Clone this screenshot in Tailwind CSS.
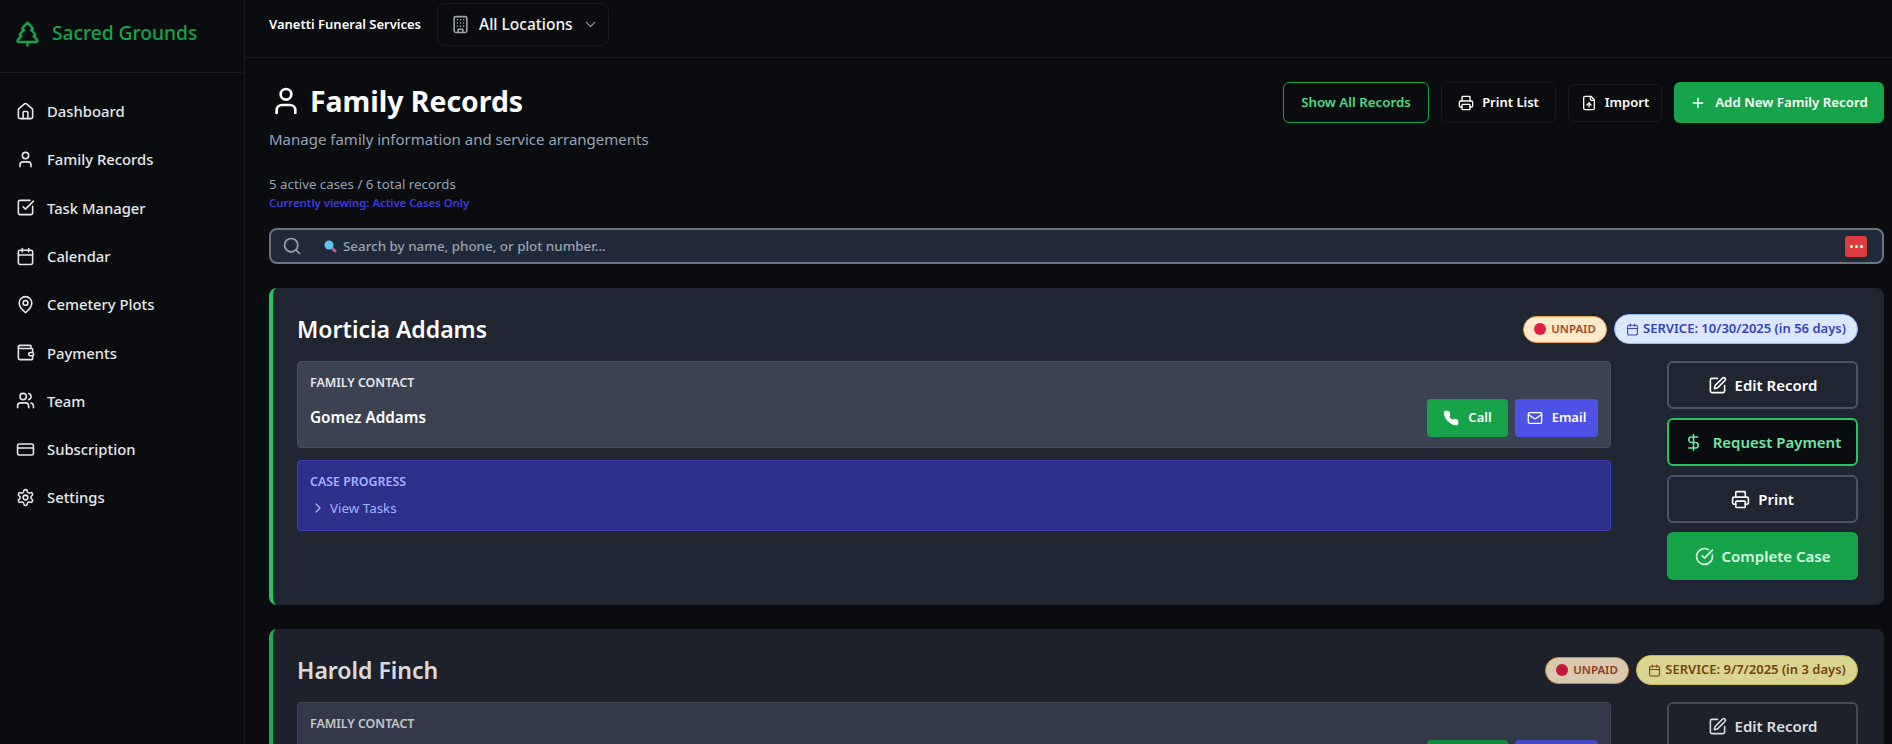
<!DOCTYPE html>
<html lang="en">
<head>
<meta charset="utf-8">
<title>Family Records</title>
<script src="https://cdn.jsdelivr.net/npm/@tailwindcss/browser@4"></script>
</head>
<body class="bg-[#0b0c0f] text-white font-['Noto_Sans',sans-serif] overflow-hidden">
<div class="flex h-[744px] w-[1892px] overflow-hidden">
  <aside class="w-[245px] shrink-0 border-r border-[#1a1c20] flex flex-col">
    <div class="h-[73px] shrink-0 border-b border-[#1a1c20] flex items-center pl-[13px] gap-[10px] pb-[6px]">
      <svg class="w-[29px] h-[29px] text-[#16a34a]" viewBox="0 0 24 24" fill="none" stroke="currentColor" stroke-width="2" stroke-linecap="round" stroke-linejoin="round"><path d="m17 14 3 3.3a1 1 0 0 1-.7 1.7H4.7a1 1 0 0 1-.7-1.7L7 14h-.3a1 1 0 0 1-.7-1.7L9 9h-.2A1 1 0 0 1 8 7.3L12 3l4 4.3a1 1 0 0 1-.8 1.7H15l3 3.3a1 1 0 0 1-.7 1.7H17Z"/><path d="M12 22v-3"/></svg>
      <span class="text-[19.2px] font-medium text-[#16a34a]">Sacred Grounds</span>
    </div>
    <nav class="flex flex-col pt-[14px] text-[14.8px] font-medium text-[#e5e7eb]">
      <a class="h-[48.3px] flex items-center gap-[12px] pl-[16px]"><svg class="w-[19px] h-[19px]" viewBox="0 0 24 24" fill="none" stroke="currentColor" stroke-width="2" stroke-linecap="round" stroke-linejoin="round"><path d="M15 21v-8a1 1 0 0 0-1-1h-4a1 1 0 0 0-1 1v8"/><path d="M3 10a2 2 0 0 1 .709-1.528l7-5.999a2 2 0 0 1 2.582 0l7 5.999A2 2 0 0 1 21 10v9a2 2 0 0 1-2 2H5a2 2 0 0 1-2-2z"/></svg>Dashboard</a>
      <a class="h-[48.3px] flex items-center gap-[12px] pl-[16px]"><svg class="w-[19px] h-[19px]" viewBox="0 0 24 24" fill="none" stroke="currentColor" stroke-width="2" stroke-linecap="round" stroke-linejoin="round"><path d="M19 21v-2a4 4 0 0 0-4-4H9a4 4 0 0 0-4 4v2"/><circle cx="12" cy="7" r="4"/></svg>Family Records</a>
      <a class="h-[48.3px] flex items-center gap-[12px] pl-[16px]"><svg class="w-[19px] h-[19px]" viewBox="0 0 24 24" fill="none" stroke="currentColor" stroke-width="2" stroke-linecap="round" stroke-linejoin="round"><path d="M21 10.5V19a2 2 0 0 1-2 2H5a2 2 0 0 1-2-2V5a2 2 0 0 1 2-2h12.5"/><path d="m9 11 3 3L22 4"/></svg>Task Manager</a>
      <a class="h-[48.3px] flex items-center gap-[12px] pl-[16px]"><svg class="w-[19px] h-[19px]" viewBox="0 0 24 24" fill="none" stroke="currentColor" stroke-width="2" stroke-linecap="round" stroke-linejoin="round"><path d="M8 2v4"/><path d="M16 2v4"/><rect x="3" y="4" width="18" height="18" rx="2"/><path d="M3 10h18"/></svg>Calendar</a>
      <a class="h-[48.3px] flex items-center gap-[12px] pl-[16px]"><svg class="w-[19px] h-[19px]" viewBox="0 0 24 24" fill="none" stroke="currentColor" stroke-width="2" stroke-linecap="round" stroke-linejoin="round"><path d="M20 10c0 4.993-5.539 10.193-7.399 11.799a1 1 0 0 1-1.202 0C9.539 20.193 4 14.993 4 10a8 8 0 0 1 16 0"/><circle cx="12" cy="10" r="3"/></svg>Cemetery Plots</a>
      <a class="h-[48.3px] flex items-center gap-[12px] pl-[16px]"><svg class="w-[19px] h-[19px]" viewBox="0 0 24 24" fill="none" stroke="currentColor" stroke-width="2" stroke-linecap="round" stroke-linejoin="round"><path d="M19 7V4a1 1 0 0 0-1-1H5a2 2 0 0 0 0 4h15a1 1 0 0 1 1 1v4h-3a2 2 0 0 0 0 4h3a1 1 0 0 0 1-1v-2a1 1 0 0 0-1-1"/><path d="M3 5v14a2 2 0 0 0 2 2h15a1 1 0 0 0 1-1v-4"/></svg>Payments</a>
      <a class="h-[48.3px] flex items-center gap-[12px] pl-[16px]"><svg class="w-[19px] h-[19px]" viewBox="0 0 24 24" fill="none" stroke="currentColor" stroke-width="2" stroke-linecap="round" stroke-linejoin="round"><path d="M16 21v-2a4 4 0 0 0-4-4H6a4 4 0 0 0-4 4v2"/><circle cx="9" cy="7" r="4"/><path d="M22 21v-2a4 4 0 0 0-3-3.87"/><path d="M16 3.13a4 4 0 0 1 0 7.75"/></svg>Team</a>
      <a class="h-[48.3px] flex items-center gap-[12px] pl-[16px]"><svg class="w-[19px] h-[19px]" viewBox="0 0 24 24" fill="none" stroke="currentColor" stroke-width="2" stroke-linecap="round" stroke-linejoin="round"><rect x="2" y="5" width="20" height="14" rx="2"/><line x1="2" y1="10" x2="22" y2="10"/></svg>Subscription</a>
      <a class="h-[48.3px] flex items-center gap-[12px] pl-[16px]"><svg class="w-[19px] h-[19px]" viewBox="0 0 24 24" fill="none" stroke="currentColor" stroke-width="2" stroke-linecap="round" stroke-linejoin="round"><path d="M12.22 2h-.44a2 2 0 0 0-2 2v.18a2 2 0 0 1-1 1.73l-.43.25a2 2 0 0 1-2 0l-.15-.08a2 2 0 0 0-2.73.73l-.22.38a2 2 0 0 0 .73 2.73l.15.1a2 2 0 0 1 1 1.72v.51a2 2 0 0 1-1 1.74l-.15.09a2 2 0 0 0-.73 2.73l.22.38a2 2 0 0 0 2.73.73l.15-.08a2 2 0 0 1 2 0l.43.25a2 2 0 0 1 1 1.73V20a2 2 0 0 0 2 2h.44a2 2 0 0 0 2-2v-.18a2 2 0 0 1 1-1.73l.43-.25a2 2 0 0 1 2 0l.15.08a2 2 0 0 0 2.73-.73l.22-.39a2 2 0 0 0-.73-2.73l-.15-.08a2 2 0 0 1-1-1.74v-.5a2 2 0 0 1 1-1.74l.15-.09a2 2 0 0 0 .73-2.73l-.22-.38a2 2 0 0 0-2.73-.73l-.15.08a2 2 0 0 1-2 0l-.43-.25a2 2 0 0 1-1-1.73V4a2 2 0 0 0-2-2z"/><circle cx="12" cy="12" r="3"/></svg>Settings</a>
    </nav>
  </aside>
  <div class="flex-1 min-w-0 flex flex-col overflow-hidden">
    <header class="h-[58px] shrink-0 border-b border-[#1a1c20] flex items-start pl-[24px] pt-[3px] gap-[16px]">
      <span class="text-[13px] font-semibold leading-[43px] text-white">Vanetti Funeral Services</span>
      <div class="h-[43px] w-[172px] rounded-lg border border-[#1a1c20] flex items-center pl-[13px] gap-[9px]">
        <svg class="w-[19px] h-[19px] text-[#9ca3af]" viewBox="0 0 24 24" fill="none" stroke="currentColor" stroke-width="2" stroke-linecap="round" stroke-linejoin="round"><rect x="4" y="2" width="16" height="20" rx="2"/><path d="M9 22v-4h6v4"/><path d="M8 6h.01"/><path d="M16 6h.01"/><path d="M12 6h.01"/><path d="M12 10h.01"/><path d="M12 14h.01"/><path d="M16 10h.01"/><path d="M16 14h.01"/><path d="M8 10h.01"/><path d="M8 14h.01"/></svg>
        <span class="text-[15.5px] font-medium text-[#f3f4f6]">All Locations</span>
        <svg class="w-[17px] h-[17px] text-[#9ca3af]" viewBox="0 0 24 24" fill="none" stroke="currentColor" stroke-width="1.6" stroke-linecap="round" stroke-linejoin="round"><path d="m6 9 6 6 6-6"/></svg>
      </div>
    </header>
    <main class="flex-1 min-h-0 pl-[24px] pr-[8px]">
      <div class="flex items-start justify-between pt-[23px]">
        <div>
          <div class="flex items-center gap-[8px] pl-[1px]">
            <svg class="w-[32px] h-[32px]" viewBox="0 0 24 24" fill="none" stroke="currentColor" stroke-width="2" stroke-linecap="round" stroke-linejoin="round"><path d="M19 21v-2a4 4 0 0 0-4-4H9a4 4 0 0 0-4 4v2"/><circle cx="12" cy="7" r="4"/></svg>
            <h1 class="text-[28.4px] leading-[40px] font-bold">Family Records</h1>
          </div>
          <p class="text-[15px] leading-[22px] mt-[7px] text-[#94a3b8]">Manage family information and service arrangements</p>
        </div>
        <div class="flex items-center gap-[12px] mt-[1px]">
          <button class="h-[41px] w-[146px] rounded-md border border-[#16a34a] text-[13.3px] font-semibold text-[#4ade80] bg-[#0b0c0f]">Show All Records</button>
          <button class="h-[41px] w-[115px] rounded-md border border-[#1a1c20] flex items-center justify-center gap-[8px] text-[13px] font-semibold"><svg class="w-[16px] h-[16px]" viewBox="0 0 24 24" fill="none" stroke="currentColor" stroke-width="2" stroke-linecap="round" stroke-linejoin="round"><path d="M6 18H4a2 2 0 0 1-2-2v-5a2 2 0 0 1 2-2h16a2 2 0 0 1 2 2v5a2 2 0 0 1-2 2h-2"/><path d="M6 9V3a1 1 0 0 1 1-1h10a1 1 0 0 1 1 1v6"/><rect x="6" y="14" width="12" height="8" rx="1"/></svg>Print List</button>
          <button class="h-[38px] w-[94px] rounded-md border border-[#1a1c20] flex items-center justify-center gap-[8px] text-[13px] font-semibold"><svg class="w-[16px] h-[16px]" viewBox="0 0 24 24" fill="none" stroke="currentColor" stroke-width="2" stroke-linecap="round" stroke-linejoin="round"><path d="M15 2H6a2 2 0 0 0-2 2v16a2 2 0 0 0 2 2h12a2 2 0 0 0 2-2V7Z"/><path d="M14 2v4a2 2 0 0 0 2 2h4"/><path d="M12 12v6"/><path d="m15 15-3-3-3 3"/></svg>Import</button>
          <button class="h-[41px] w-[210px] rounded-md bg-[#16a34a] flex items-center justify-center gap-[9px] text-[13.3px] font-semibold"><svg class="w-[16px] h-[16px]" viewBox="0 0 24 24" fill="none" stroke="currentColor" stroke-width="2" stroke-linecap="round" stroke-linejoin="round"><path d="M5 12h14"/><path d="M12 5v14"/></svg>Add New Family Record</button>
        </div>
      </div>
      <p class="text-[13.3px] leading-[20px] mt-[24px] text-[#94a3b8]">5 active cases / 6 total records</p>
      <p class="text-[11.3px] leading-[16px] mt-[1px] font-semibold text-[#3b3be0]">Currently viewing: Active Cases Only</p>
      <div class="mt-[17px] h-[36px] rounded-lg border-2 border-[#6b7280] bg-[#1f2937] flex items-center pl-[11px] pr-[15px]">
        <svg class="w-[20px] h-[20px] text-[#9ca3af]" viewBox="0 0 24 24" fill="none" stroke="currentColor" stroke-width="2" stroke-linecap="round" stroke-linejoin="round"><circle cx="11" cy="11" r="8"/><path d="m21 21-4.3-4.3"/></svg>
        <svg class="w-[14px] h-[14px] ml-[21px]" viewBox="0 0 14 14"><line x1="8" y1="8" x2="12" y2="12" stroke="#c05a9a" stroke-width="3" stroke-linecap="round"/><circle cx="6" cy="6" r="4.5" fill="#5cc8f0"/></svg>
        <span class="ml-[6px] text-[13.4px] font-medium text-[#9ca3af]">Search by name, phone, or plot number...</span>
        <span class="ml-auto w-[22px] h-[21px] rounded-[3px] bg-[#dc3c3c] flex items-center justify-center gap-[2px]"><i class="w-[3px] h-[3px] rounded-full bg-white"></i><i class="w-[3px] h-[3px] rounded-full bg-white"></i><i class="w-[3px] h-[3px] rounded-full bg-white"></i></span>
      </div>
      <section class="mt-[24px] rounded-lg border-l-4 border-[#22c55e] bg-[#1f2531] px-6 pt-6 pb-[25px] pr-[26px]">
        <div class="h-[34px] flex items-center justify-between mb-[15px]">
          <h2 class="text-[23px] font-semibold">Morticia Addams</h2>
          <div class="flex items-center gap-[7px]">
            <span class="h-[27px] w-[84px] rounded-full border border-[#f0a050] bg-[#fdeacb] flex items-center justify-center gap-[5px] text-[11.5px] font-semibold text-[#a8451c]"><i class="w-[12px] h-[12px] rounded-full bg-[#e11d48]"></i>UNPAID</span>
            <span class="h-[30px] w-[244px] rounded-full border border-[#93b4f5] bg-[#dbe7fe] flex items-center justify-center gap-[4px] text-[13px] font-semibold text-[#3344b8]"><svg class="w-[13px] h-[13px]" viewBox="0 0 24 24" fill="none" stroke="currentColor" stroke-width="2" stroke-linecap="round" stroke-linejoin="round"><path d="M8 2v4"/><path d="M16 2v4"/><rect x="3" y="4" width="18" height="18" rx="2"/><path d="M3 10h18"/></svg>SERVICE: 10/30/2025 (in 56 days)</span>
          </div>
        </div>
        <div class="flex gap-[56px]">
          <div class="flex-1 min-w-0 flex flex-col gap-[12px]">
            <div class="h-[87px] rounded border border-[#4a4f5d] bg-[#3b4252] px-[12px] pt-[13px]">
              <div class="text-[12.4px] leading-[16px] font-semibold uppercase text-[#e5e7eb]">Family Contact</div>
              <div class="flex items-center justify-between mt-[8px]">
                <span class="text-[15.3px] font-semibold pb-[2px]">Gomez Addams</span>
                <div class="flex gap-[7px]">
                  <button class="h-[38px] w-[81px] rounded bg-[#16a34a] flex items-center justify-center gap-[9px] text-[13px] font-semibold"><svg class="w-[16px] h-[16px]" viewBox="0 0 24 24" fill="currentColor" stroke="currentColor" stroke-width="2" stroke-linecap="round" stroke-linejoin="round"><path d="M22 16.92v3a2 2 0 0 1-2.18 2 19.79 19.79 0 0 1-8.63-3.07 19.5 19.5 0 0 1-6-6 19.79 19.79 0 0 1-3.07-8.67A2 2 0 0 1 4.11 2h3a2 2 0 0 1 2 1.72 12.84 12.84 0 0 0 .7 2.81 2 2 0 0 1-.45 2.11L8.09 9.91a16 16 0 0 0 6 6l1.27-1.27a2 2 0 0 1 2.11-.45 12.84 12.84 0 0 0 2.81.7A2 2 0 0 1 22 16.92z"/></svg>Call</button>
                  <button class="h-[38px] w-[83px] rounded bg-[#4f52e8] flex items-center justify-center gap-[9px] text-[13px] font-semibold"><svg class="w-[16px] h-[16px]" viewBox="0 0 24 24" fill="none" stroke="currentColor" stroke-width="2" stroke-linecap="round" stroke-linejoin="round"><rect x="2" y="4" width="20" height="16" rx="2"/><path d="m22 7-8.97 5.7a1.94 1.94 0 0 1-2.06 0L2 7"/></svg>Email</button>
                </div>
              </div>
            </div>
            <div class="h-[71px] rounded border border-[#3f3fb5] bg-[#2e2f8a] px-[12px] pt-[13px]">
              <div class="text-[12.4px] leading-[16px] font-semibold uppercase text-[#a5b4fc]">Case Progress</div>
              <div class="flex items-center gap-[4px] mt-[8px] text-[13.4px] text-[#a5b4fc]"><svg class="w-[16px] h-[16px]" viewBox="0 0 24 24" fill="none" stroke="currentColor" stroke-width="2" stroke-linecap="round" stroke-linejoin="round"><path d="m9 18 6-6-6-6"/></svg><span>View Tasks</span></div>
            </div>
          </div>
          <div class="w-[191px] shrink-0 flex flex-col gap-[9px]">
            <button class="h-[48px] rounded-md border-2 border-[#4b5563] flex items-center justify-center gap-[8px] text-[15px] font-semibold"><svg class="w-[19px] h-[19px]" viewBox="0 0 24 24" fill="none" stroke="currentColor" stroke-width="2" stroke-linecap="round" stroke-linejoin="round"><path d="M12 3H5a2 2 0 0 0-2 2v14a2 2 0 0 0 2 2h14a2 2 0 0 0 2-2v-7"/><path d="M18.375 2.625a1 1 0 0 1 3 3l-9.013 9.014a2 2 0 0 1-.853.505l-2.873.84a.5.5 0 0 1-.62-.62l.84-2.873a2 2 0 0 1 .506-.852z"/></svg>Edit Record</button>
            <button class="h-[48px] rounded-md border-2 border-[#22c55e] bg-[#0b0c0f] flex items-center justify-center gap-[10px] text-[15px] font-semibold text-[#6ee7a0]"><svg class="w-[19px] h-[19px]" viewBox="0 0 24 24" fill="none" stroke="currentColor" stroke-width="2" stroke-linecap="round" stroke-linejoin="round"><line x1="12" y1="2" x2="12" y2="22"/><path d="M17 5H9.5a3.5 3.5 0 0 0 0 7h5a3.5 3.5 0 0 1 0 7H6"/></svg>Request Payment</button>
            <button class="h-[48px] rounded-md border-2 border-[#4b5563] flex items-center justify-center gap-[8px] text-[15px] font-semibold"><svg class="w-[19px] h-[19px]" viewBox="0 0 24 24" fill="none" stroke="currentColor" stroke-width="2" stroke-linecap="round" stroke-linejoin="round"><path d="M6 18H4a2 2 0 0 1-2-2v-5a2 2 0 0 1 2-2h16a2 2 0 0 1 2 2v5a2 2 0 0 1-2 2h-2"/><path d="M6 9V3a1 1 0 0 1 1-1h10a1 1 0 0 1 1 1v6"/><rect x="6" y="14" width="12" height="8" rx="1"/></svg>Print</button>
            <button class="h-[48px] rounded-md bg-[#16a34a] flex items-center justify-center gap-[8px] text-[15px] font-semibold text-[#dcfce7]"><svg class="w-[19px] h-[19px]" viewBox="0 0 24 24" fill="none" stroke="currentColor" stroke-width="2" stroke-linecap="round" stroke-linejoin="round"><path d="M21.801 10A10 10 0 1 1 17 3.335"/><path d="m9 11 3 3L22 4"/></svg>Complete Case</button>
          </div>
        </div>
      </section>
      <section class="mt-[24px] rounded-lg border-l-4 border-[#22c55e] bg-[#1f2531] px-6 pt-6 pb-[25px] pr-[26px] opacity-85">
        <div class="h-[34px] flex items-center justify-between mb-[15px]">
          <h2 class="text-[23px] font-semibold">Harold Finch</h2>
          <div class="flex items-center gap-[7px]">
            <span class="h-[27px] w-[84px] rounded-full border border-[#f0a050] bg-[#fdeacb] flex items-center justify-center gap-[5px] text-[11.5px] font-semibold text-[#a8451c]"><i class="w-[12px] h-[12px] rounded-full bg-[#e11d48]"></i>UNPAID</span>
            <span class="h-[30px] w-[222px] rounded-full border border-[#eadb45] bg-[#fef9a8] flex items-center justify-center gap-[4px] text-[13px] font-semibold text-[#854d0e]"><svg class="w-[13px] h-[13px]" viewBox="0 0 24 24" fill="none" stroke="currentColor" stroke-width="2" stroke-linecap="round" stroke-linejoin="round"><path d="M8 2v4"/><path d="M16 2v4"/><rect x="3" y="4" width="18" height="18" rx="2"/><path d="M3 10h18"/></svg>SERVICE: 9/7/2025 (in 3 days)</span>
          </div>
        </div>
        <div class="flex gap-[56px]">
          <div class="flex-1 min-w-0">
            <div class="h-[87px] rounded border border-[#4a4f5d] bg-[#3b4252] px-[12px] pt-[13px]">
              <div class="text-[12.4px] leading-[16px] font-semibold uppercase text-[#e5e7eb]">Family Contact</div>
              <div class="flex items-center justify-end mt-[8px]">
                <div class="flex gap-[7px]">
                  <div class="h-[38px] w-[81px] rounded bg-[#16a34a]"></div>
                  <div class="h-[38px] w-[83px] rounded bg-[#4f52e8]"></div>
                </div>
              </div>
            </div>
          </div>
          <div class="w-[191px] shrink-0">
            <button class="h-[48px] w-full rounded-md border-2 border-[#4b5563] flex items-center justify-center gap-[8px] text-[15px] font-semibold"><svg class="w-[19px] h-[19px]" viewBox="0 0 24 24" fill="none" stroke="currentColor" stroke-width="2" stroke-linecap="round" stroke-linejoin="round"><path d="M12 3H5a2 2 0 0 0-2 2v14a2 2 0 0 0 2 2h14a2 2 0 0 0 2-2v-7"/><path d="M18.375 2.625a1 1 0 0 1 3 3l-9.013 9.014a2 2 0 0 1-.853.505l-2.873.84a.5.5 0 0 1-.62-.62l.84-2.873a2 2 0 0 1 .506-.852z"/></svg>Edit Record</button>
          </div>
        </div>
      </section>
    </main>
  </div>
</div>
</body>
</html>
